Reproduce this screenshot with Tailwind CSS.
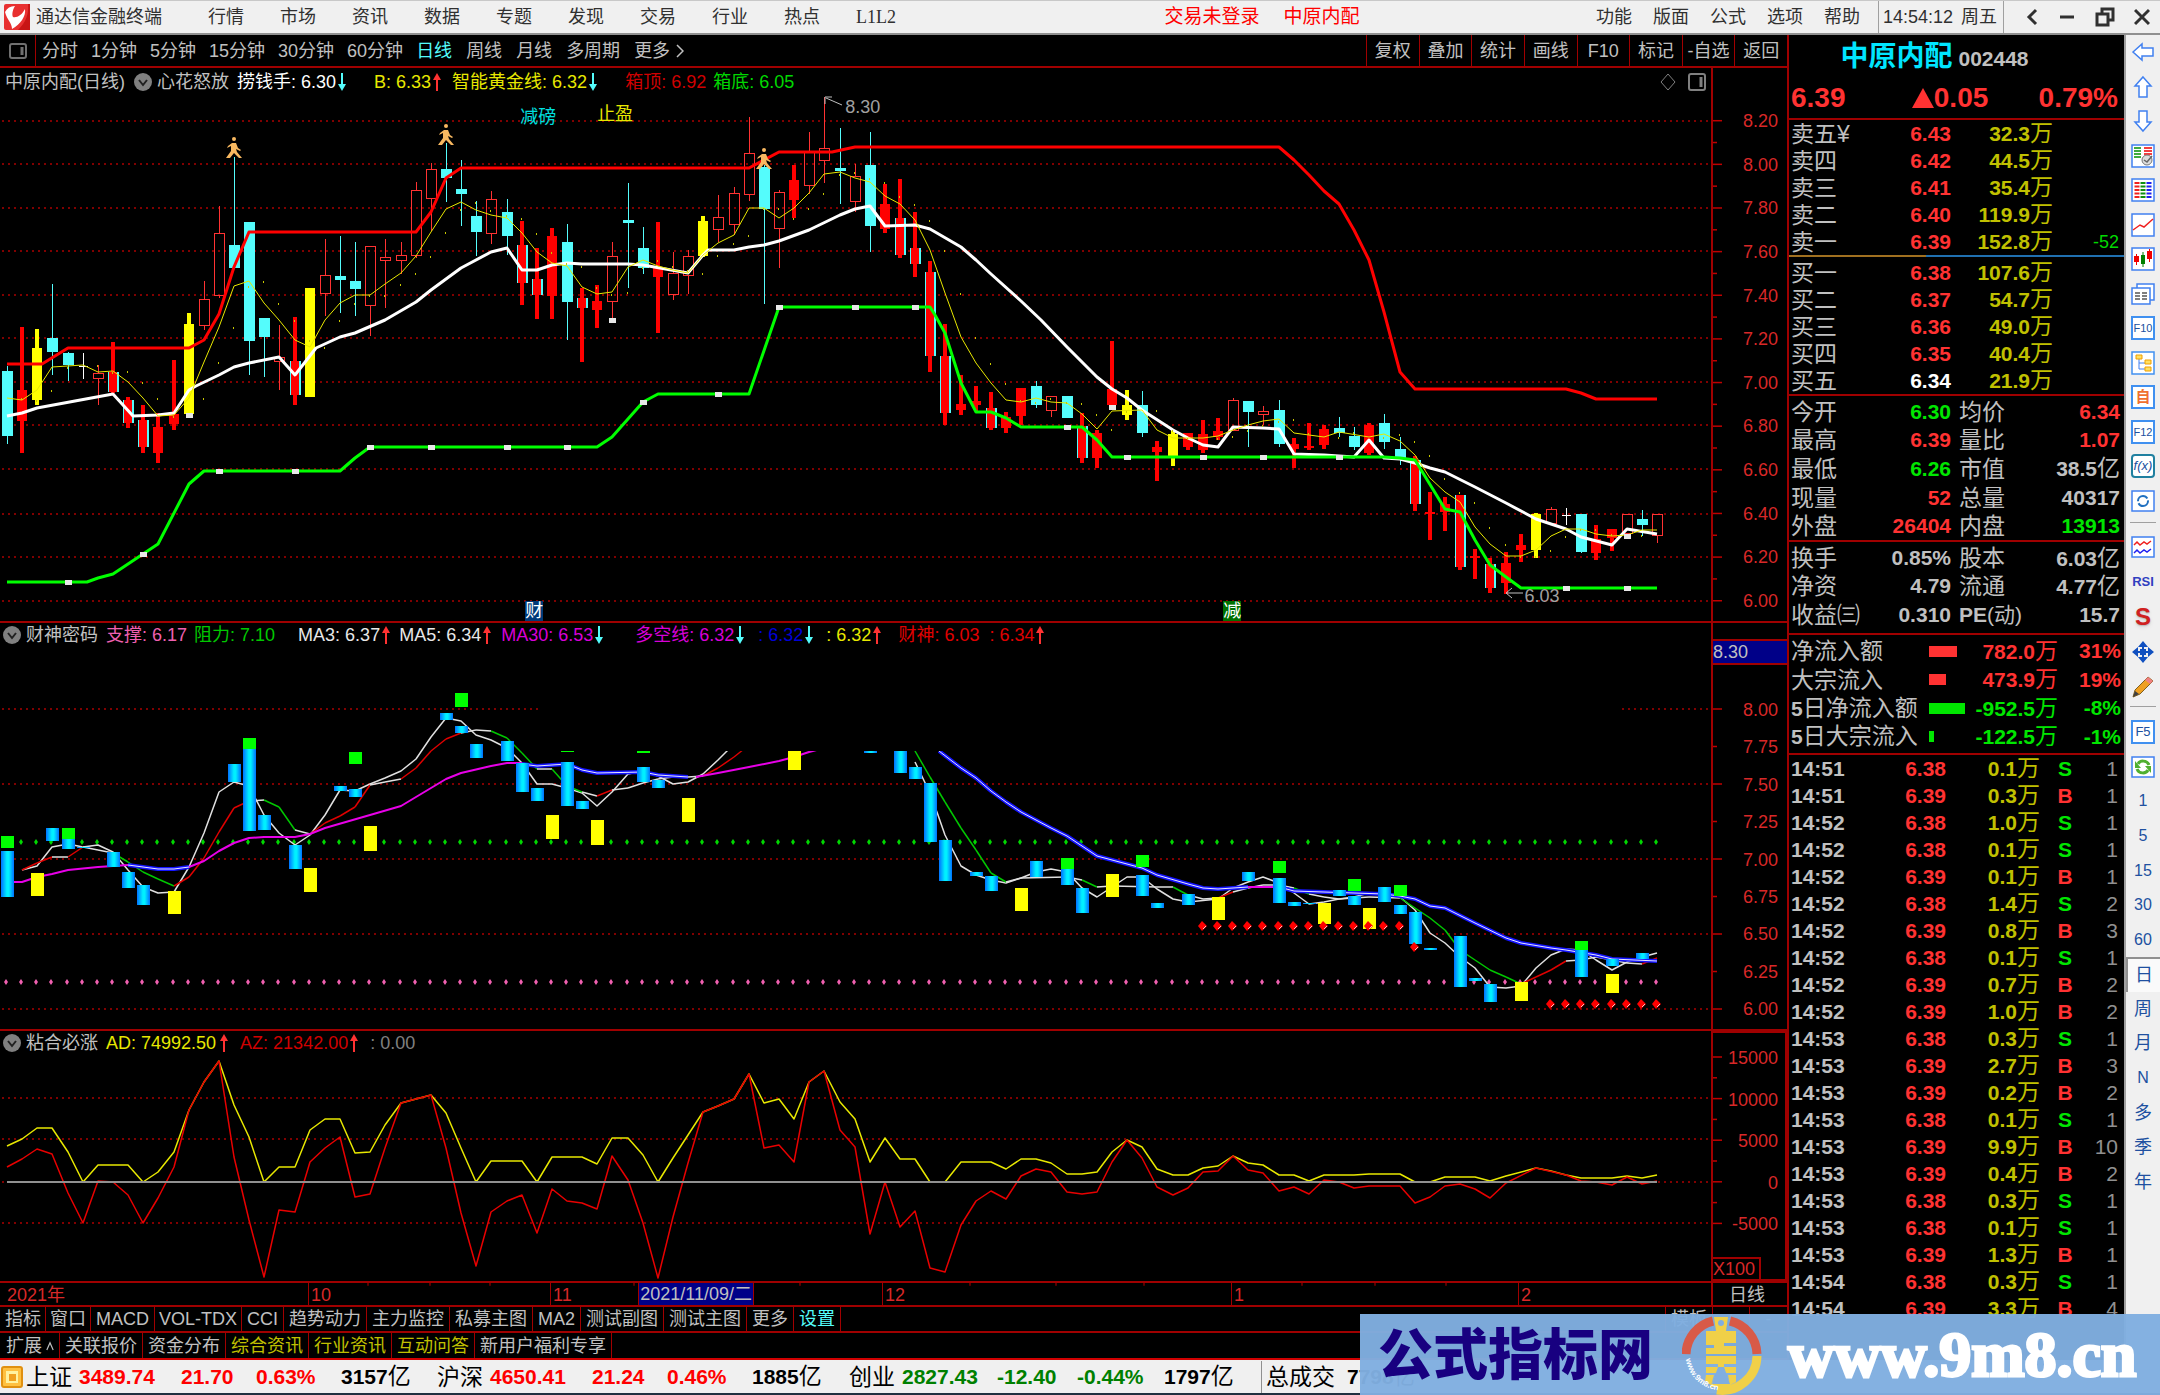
<!DOCTYPE html>
<html lang="zh-CN">
<head>
  <meta charset="UTF-8">
  <meta name="viewport" content="width=device-width, initial-scale=1.0">
  <title>通达信金融终端</title>
  <script src="https://cdn.jsdelivr.net/npm/@tailwindcss/browser@4"></script>
</head>
<body class="bg-black font-['Liberation_Sans','Noto_Sans_CJK_SC',sans-serif] text-[18px] leading-5 text-[#c0c0c0] whitespace-nowrap">
<div class="relative overflow-hidden">

  <!-- menu -->
  <header class="flex h-[35px] items-center border-t border-b-2 border-t-[#c8c8c8] border-b-[#909090] bg-[#f0f0f0] text-[#303030]">
    <svg class="ml-1 h-[26px] w-[26px]" viewBox="0 0 26 26"><rect width="26" height="26" rx="2" fill="#e83030"/><path d="M14 26C22 18 25 10 24 0h2v26z" fill="#c81414"/><path d="M1 8Q4 2 11 2C8 7 8 11 9 13c4 1 9-2 12-8 1 7-4 15-13 20C8 19 3 16 1 8z" fill="#fff"/></svg>
    <span class="ml-1.5 w-[172px]">通达信金融终端</span>
    <nav class="flex">
      <button class="w-[72px] text-left">行情</button>
      <button class="w-[72px] text-left">市场</button>
      <button class="w-[72px] text-left">资讯</button>
      <button class="w-[72px] text-left">数据</button>
      <button class="w-[72px] text-left">专题</button>
      <button class="w-[72px] text-left">发现</button>
      <button class="w-[72px] text-left">交易</button>
      <button class="w-[72px] text-left">行业</button>
      <button class="w-[72px] text-left">热点</button>
      <button class="w-[72px] text-left font-['Liberation_Serif',serif]">L1L2</button>
    </nav>
    <div class="flex flex-1 justify-center gap-6 text-[19px] text-[#ff0000]"><span>交易未登录</span><span>中原内配</span></div>
    <nav class="flex">
      <button class="w-[57px] text-left">功能</button>
      <button class="w-[57px] text-left">版面</button>
      <button class="w-[57px] text-left">公式</button>
      <button class="w-[57px] text-left">选项</button>
      <button class="w-[54px] text-left">帮助</button>
    </nav>
    <div class="flex h-full w-[126px] items-center gap-2 border-x border-[#a0a0a0] pl-1"><span>14:54:12</span><span>周五</span></div>
    <div class="flex w-[156px] items-center justify-between pr-[10px] pl-[20px]">
      <button aria-label="后退"><svg class="h-5 w-4" viewBox="0 0 16 20" fill="none" stroke="#303030" stroke-width="3"><path d="M12 3L5 10l7 7"/></svg></button>
      <button aria-label="最小化"><svg class="h-5 w-4" viewBox="0 0 16 20" stroke="#303030" stroke-width="3"><path d="M1 10h14"/></svg></button>
      <button aria-label="还原"><svg class="h-5 w-5" viewBox="0 0 20 20" fill="none" stroke="#303030" stroke-width="3"><path d="M2 7h11v11H2zM7 7V2h11v11h-5"/></svg></button>
      <button aria-label="关闭"><svg class="h-5 w-4" viewBox="0 0 16 20" stroke="#303030" stroke-width="3"><path d="M1 3l14 14M15 3L1 17"/></svg></button>
    </div>
  </header>

  <div class="flex">
    <main class="min-w-0 flex-1 border-r-2 border-[#a00000]">

      <!-- period toolbar -->
      <div class="flex h-[33px] items-stretch justify-between border-b-2 border-[#a00000]">
        <div class="flex items-center">
          <button class="flex h-full w-9 items-center justify-center border-r border-[#a00000]" aria-label="侧栏"><svg class="h-4 w-[18px]" viewBox="0 0 18 16" fill="none" stroke="#707070" stroke-width="2"><rect x="1" y="1" width="16" height="14" rx="2"/><path d="M13 4v8" stroke-width="3"/></svg></button>
          <div class="flex gap-[13px] pl-[6px]">
            <button>分时</button><button>1分钟</button><button>5分钟</button><button>15分钟</button><button>30分钟</button><button>60分钟</button>
          </div>
          <div class="flex gap-[14px] pl-[13px]">
            <button class="text-[#54fcfc]">日线</button><button>周线</button><button>月线</button><button>多周期</button>
            <button class="flex items-center gap-1.5">更多<svg class="h-4 w-2" viewBox="0 0 8 16" fill="none" stroke="#c0c0c0" stroke-width="1.5"><path d="M1 2l6 6-6 6"/></svg></button>
          </div>
        </div>
        <div class="grid w-[421px] grid-cols-8">
          <button class="border-l border-[#a00000]">复权</button>
          <button class="border-l border-[#a00000]">叠加</button>
          <button class="border-l border-[#a00000]">统计</button>
          <button class="border-l border-[#a00000]">画线</button>
          <button class="border-l border-[#a00000]">F10</button>
          <button class="border-l border-[#a00000]">标记</button>
          <button class="border-l border-[#a00000]">-自选</button>
          <button class="border-l border-[#a00000]">返回</button>
        </div>
      </div>

      <!-- price panel -->
      <section class="flex h-[555px] border-b-2 border-[#a00000]">
        <div class="relative min-w-0 flex-1">
          <svg id="kline" class="absolute inset-0 h-full w-full" viewBox="0 68 1711 553" preserveAspectRatio="none"></svg>
          <div class="relative flex h-7 items-center pl-[5px]">
            <span>中原内配(日线)</span>
            <svg class="ml-[9px] h-[18px] w-[18px]" viewBox="0 0 18 18"><circle cx="9" cy="9" r="9" fill="#808080"/><path d="M5 7l4 5 4-5" fill="none" stroke="#202020" stroke-width="2"/></svg>
            <span class="ml-[5px]">心花怒放</span>
            <span class="ml-2 text-white">捞钱手: 6.30</span><svg class="ml-0.5 h-5 w-2" viewBox="0 0 8 20"><path d="M4 1v12" stroke="#54fcfc" stroke-width="2"/><path d="M0 12h8l-4 7z" fill="#54fcfc"/></svg>
            <span class="ml-7 text-[#e8e800]">B: 6.33</span><svg class="ml-0.5 h-5 w-2" viewBox="0 0 8 20"><path d="M4 19V7" stroke="#ff3232" stroke-width="2"/><path d="M0 8h8L4 1z" fill="#ff3232"/></svg>
            <span class="ml-[11px] text-[#e8e800]">智能黄金线: 6.32</span><svg class="ml-0.5 h-5 w-2" viewBox="0 0 8 20"><path d="M4 1v12" stroke="#54fcfc" stroke-width="2"/><path d="M0 12h8l-4 7z" fill="#54fcfc"/></svg>
            <span class="ml-7 text-[#d00000]">箱顶: 6.92</span>
            <span class="ml-[7px] text-[#00d800]">箱底: 6.05</span>
            <svg class="mr-[5px] ml-auto h-5 w-[46px]" viewBox="0 0 46 20" fill="none" stroke="#808080"><path d="M8 2l7 8-7 8-7-8z"/><rect x="29" y="2" width="16" height="16" rx="2" stroke-width="2"/><path d="M41 5v10" stroke-width="3"/></svg>
          </div>
          <span class="absolute top-[39px] left-[30.4%] text-[#00e0e0]">减磅</span>
          <span class="absolute top-[36px] left-[34.9%] text-[#e8e800]">止盈</span>
          <span class="absolute top-[29px] left-[49.4%] text-[#a0a0a0]">8.30</span>
          <span class="absolute top-[518px] left-[89.1%] text-[#a0a0a0]">6.03</span>
          <span class="absolute top-[533px] left-[30.7%] bg-[#003a78] text-white">财</span>
          <span class="absolute top-[533px] left-[71.5%] bg-[#007000] text-white">减</span>
        </div>
        <div class="relative w-[76px] border-l-2 border-[#a00000]">
          <svg id="ticks1" class="absolute inset-0 h-full w-4" viewBox="0 68 16 553"></svg>
          <div class="flex h-full flex-col justify-between pt-[43px] pr-[9px] pb-[10px] text-right text-[#d82828]">
            <span>8.20</span><span>8.00</span><span>7.80</span><span>7.60</span><span>7.40</span><span>7.20</span><span>7.00</span><span>6.80</span><span>6.60</span><span>6.40</span><span>6.20</span><span>6.00</span>
          </div>
        </div>
      </section>

      <!-- 财神密码 -->
      <section class="flex h-[408px] border-b-2 border-[#a00000]">
        <div class="relative min-w-0 flex-1">
          <svg id="wealth" class="absolute inset-0 h-full w-full" viewBox="0 623 1711 406" preserveAspectRatio="none"></svg>
          <div class="relative flex h-6 items-center pl-[3px]">
            <svg class="h-[18px] w-[18px]" viewBox="0 0 18 18"><circle cx="9" cy="9" r="9" fill="#808080"/><path d="M5 7l4 5 4-5" fill="none" stroke="#202020" stroke-width="2"/></svg>
            <span class="ml-[5px]">财神密码</span>
            <span class="ml-2 text-[#f060b0]">支撑: 6.17</span>
            <span class="ml-[7px] text-[#00c800]">阻力: 7.10</span>
            <span class="ml-[23px] text-[#e8e8e8]">MA3: 6.37</span><svg class="ml-0.5 h-5 w-2" viewBox="0 0 8 20"><path d="M4 19V7" stroke="#ff3232" stroke-width="2"/><path d="M0 8h8L4 1z" fill="#ff3232"/></svg>
            <span class="ml-[9px] text-[#e8e8e8]">MA5: 6.34</span><svg class="ml-0.5 h-5 w-2" viewBox="0 0 8 20"><path d="M4 19V7" stroke="#ff3232" stroke-width="2"/><path d="M0 8h8L4 1z" fill="#ff3232"/></svg>
            <span class="ml-[10px] text-[#d800d8]">MA30: 6.53</span><svg class="ml-0.5 h-5 w-2" viewBox="0 0 8 20"><path d="M4 1v12" stroke="#54fcfc" stroke-width="2"/><path d="M0 12h8l-4 7z" fill="#54fcfc"/></svg>
            <span class="ml-8 text-[#d800d8]">多空线: 6.32</span><svg class="ml-0.5 h-5 w-2" viewBox="0 0 8 20"><path d="M4 1v12" stroke="#54fcfc" stroke-width="2"/><path d="M0 12h8l-4 7z" fill="#54fcfc"/></svg>
            <span class="ml-[14px] text-[#0000d8]">: 6.32</span><svg class="ml-0.5 h-5 w-2" viewBox="0 0 8 20"><path d="M4 1v12" stroke="#54fcfc" stroke-width="2"/><path d="M0 12h8l-4 7z" fill="#54fcfc"/></svg>
            <span class="ml-[13px] text-[#e8e800]">: 6.32</span><svg class="ml-0.5 h-5 w-2" viewBox="0 0 8 20"><path d="M4 19V7" stroke="#ff3232" stroke-width="2"/><path d="M0 8h8L4 1z" fill="#ff3232"/></svg>
            <span class="ml-[17px] text-[#e00000]">财神: 6.03</span>
            <span class="ml-[10px] text-[#e00000]">: 6.34</span><svg class="ml-0.5 h-5 w-2" viewBox="0 0 8 20"><path d="M4 19V7" stroke="#ff3232" stroke-width="2"/><path d="M0 8h8L4 1z" fill="#ff3232"/></svg>
          </div>
        </div>
        <div class="relative w-[76px] border-l-2 border-[#a00000]">
          <svg id="ticks2" class="absolute inset-0 h-full w-4" viewBox="0 623 16 406"></svg>
          <div class="flex h-full flex-col justify-between pt-[77px] pr-[9px] pb-[10px] text-right text-[#d82828]">
            <span>8.00</span><span>7.75</span><span>7.50</span><span>7.25</span><span>7.00</span><span>6.75</span><span>6.50</span><span>6.25</span><span>6.00</span>
          </div>
          <span class="absolute top-4 left-0 w-full border-y-2 border-[#a00000] bg-[#000088] py-px">8.30</span>
        </div>
      </section>

      <!-- 粘合必涨 -->
      <section class="flex h-[252px] border-b-2 border-[#a00000]">
        <div class="relative min-w-0 flex-1">
          <svg id="glue" class="absolute inset-0 h-full w-full" viewBox="0 1031 1711 250" preserveAspectRatio="none"></svg>
          <div class="relative flex h-6 items-center pl-[3px]">
            <svg class="h-[18px] w-[18px]" viewBox="0 0 18 18"><circle cx="9" cy="9" r="9" fill="#808080"/><path d="M5 7l4 5 4-5" fill="none" stroke="#202020" stroke-width="2"/></svg>
            <span class="ml-[5px]">粘合必涨</span>
            <span class="ml-2 text-[#e8e800]">AD: 74992.50</span><svg class="ml-1 h-5 w-2" viewBox="0 0 8 20"><path d="M4 19V7" stroke="#ff3232" stroke-width="2"/><path d="M0 8h8L4 1z" fill="#ff3232"/></svg>
            <span class="ml-3 text-[#d00000]">AZ: 21342.00</span><svg class="ml-0.5 h-5 w-2" viewBox="0 0 8 20"><path d="M4 19V7" stroke="#ff3232" stroke-width="2"/><path d="M0 8h8L4 1z" fill="#ff3232"/></svg>
            <span class="ml-3 text-[#808080]">: 0.00</span>
          </div>
        </div>
        <div class="relative w-[76px] border-2 border-[#a00000]">
          <svg id="ticks3" class="absolute inset-0 h-full w-4" viewBox="0 1033 16 246"></svg>
          <div class="flex h-full flex-col justify-between pt-[15px] pr-[7px] pb-[45px] text-right text-[#d82828]">
            <span>15000</span><span>10000</span><span>5000</span><span>0</span><span>-5000</span>
          </div>
          <span class="absolute bottom-0 left-0 border-t-2 border-r-2 border-[#a00000] pr-1 text-[#d82828]">X100</span>
        </div>
      </section>

      <!-- dates -->
      <div class="flex h-6 border-b-2 border-[#a00000]">
        <div class="relative grid min-w-0 flex-1 grid-cols-[308fr_242fr_332fr_349fr_287fr_193fr] items-stretch text-[#d82828]">
          <svg id="dateTicks" class="absolute inset-0 h-full w-full" viewBox="0 0 1711 24" preserveAspectRatio="none"></svg>
          <span class="pt-0.5 pl-[7px]">2021年</span>
          <span class="border-l border-[#a00000] pt-0.5 pl-0.5">10</span>
          <span class="border-l border-[#a00000] pt-0.5 pl-0.5">11</span>
          <span class="border-l border-[#a00000] pt-0.5 pl-0.5">12</span>
          <span class="border-l border-[#a00000] pt-0.5 pl-0.5">1</span>
          <span class="border-l border-[#a00000] pt-0.5 pl-0.5">2</span>
          <span class="absolute top-0 left-[37.3%] border-x border-[#a00000] bg-[#000088] px-px py-px text-[#c0c0c0]">2021/11/09/二</span>
        </div>
        <span class="w-[76px] border-l-2 border-[#a00000] pt-0.5 pl-4">日线</span>
      </div>

      <!-- indicator tabs -->
      <div class="flex h-[26px] items-stretch border-b-2 border-[#a00000] pl-px">
        <button class="border-r border-[#a00000] px-1">指标</button>
        <button class="border-r border-[#a00000] px-1">窗口</button>
        <button class="border-r border-[#a00000] px-[5px]">MACD</button>
        <button class="border-r border-[#a00000] px-1">VOL-TDX</button>
        <button class="border-r border-[#a00000] px-[5px]">CCI</button>
        <button class="border-r border-[#a00000] px-[5px]">趋势动力</button>
        <button class="border-r border-[#a00000] px-[5px]">主力监控</button>
        <button class="border-r border-[#a00000] px-[5px]">私募主图</button>
        <button class="border-r border-[#a00000] px-[5px]">MA2</button>
        <button class="border-r border-[#a00000] px-[5px]">测试副图</button>
        <button class="border-r border-[#a00000] px-[5px]">测试主图</button>
        <button class="border-r border-[#a00000] px-[5px]">更多</button>
        <button class="border-r border-[#a00000] px-[5px] text-[#54fcfc]">设置</button>
        <button class="ml-auto border-x border-[#a00000] px-[5px]">模板</button>
        <button class="w-[37px] border-r border-[#a00000]">+</button>
        <button class="w-[37px]">-</button>
      </div>
      <div class="flex h-[27px] items-stretch border-b-2 border-[#d00000] pl-px">
        <button class="flex items-center gap-1 border-r border-[#a00000] px-[5px]">扩展<svg class="h-3 w-2" viewBox="0 0 10 12" fill="none" stroke="#c0c0c0" stroke-width="1.5"><path d="M1 11l4-9 4 9"/></svg></button>
        <button class="border-r border-[#a00000] px-[5px]">关联报价</button>
        <button class="border-r border-[#a00000] px-[5px]">资金分布</button>
        <button class="border-r border-[#a00000] px-[5px] text-[#c0c000]">综合资讯</button>
        <button class="border-r border-[#a00000] px-[5px] text-[#c0c000]">行业资讯</button>
        <button class="border-r border-[#a00000] px-[5px] text-[#c0c000]">互动问答</button>
        <button class="border-r border-[#a00000] px-[5px]">新用户福利专享</button>
      </div>
    </main>

    <!-- quote -->
    <aside class="h-[1325px] w-[335px] overflow-hidden text-[21px] leading-6 font-bold">
      <div class="flex h-[85px] flex-col border-b-2 border-[#a00000]">
        <h1 class="flex items-center justify-center gap-1.5 pt-1.5 pr-11"><span class="text-[28px] leading-8 text-[#00e5ff]">中原内配</span><span class="pt-1">002448</span></h1>
        <div class="flex items-center justify-between pt-[9px] pr-1.5 pl-0.5 text-[28px] leading-8 text-[#ff3232]">
          <span>6.39</span>
          <span class="flex items-center pl-4"><svg class="h-5 w-[22px]" viewBox="0 0 22 20"><path d="M11 0l11 20H0z" fill="#ff3232"/></svg>0.05</span>
          <span>0.79%</span>
        </div>
      </div>
      <table class="w-full table-fixed">
        <colgroup><col class="w-[99px]"><col class="w-[63px]"><col class="w-[102px]"><col></colgroup>
        <tbody id="asks"></tbody>
      </table>
      <div class="flex h-0.5"><span class="w-[41%] bg-[#a07020]"></span><span class="flex-1 bg-[#2070b0]"></span></div>
      <div class="h-[139px] border-b-2 border-[#a00000] pt-0.5">
        <table class="w-full table-fixed">
          <colgroup><col class="w-[99px]"><col class="w-[63px]"><col class="w-[102px]"><col></colgroup>
          <tbody id="bids"></tbody>
        </table>
      </div>
      <div class="h-[146px] border-b-2 border-[#a00000] pt-0.5">
        <table class="h-full w-full table-fixed">
          <colgroup><col class="w-[82px]"><col class="w-[80px]"><col class="w-[78px]"><col></colgroup>
          <tbody id="stats"></tbody>
        </table>
      </div>
      <div class="h-[93px] border-b-2 border-[#a00000] pt-0.5 pb-1">
        <table class="h-full w-full table-fixed">
          <colgroup><col class="w-[82px]"><col class="w-[80px]"><col class="w-[78px]"><col></colgroup>
          <tbody id="stats2"></tbody>
        </table>
      </div>
      <div class="h-[120px] border-b-2 border-[#a00000] pt-0.5 pb-0.5">
        <table class="h-full w-full table-fixed">
          <colgroup><col class="w-[140px]"><col class="w-[36px]"><col class="w-[93px]"><col></colgroup>
          <tbody id="flow"></tbody>
        </table>
      </div>
      <table class="w-full table-fixed">
        <colgroup><col class="w-[90px]"><col class="w-[67px]"><col class="w-[94px]"><col class="w-[50px]"><col></colgroup>
        <tbody id="trades"></tbody>
      </table>
    </aside>

    <!-- side tools -->
    <nav class="w-9 border-l-2 border-[#a0a0a0] bg-[#f0f0f0] text-[#2050a0]">
      <div class="grid h-[483px] auto-rows-fr place-items-center [&_svg]:h-6 [&_svg]:w-6">
        <button aria-label="左"><svg viewBox="0 0 24 24" fill="#fff" stroke="#4080f0" stroke-width="1.5"><path d="M2 12l9-8v4h11v8H11v4z"/></svg></button>
        <button aria-label="上"><svg viewBox="0 0 24 24" fill="#fff" stroke="#4080f0" stroke-width="1.5"><path d="M12 2l8 9h-4v11H8V11H4z"/></svg></button>
        <button aria-label="下"><svg viewBox="0 0 24 24" fill="#fff" stroke="#4080f0" stroke-width="1.5"><path d="M12 22l8-9h-4V2H8v11H4z"/></svg></button>
        <button aria-label="报价"><svg viewBox="0 0 24 24" fill="none"><rect x="1" y="1" width="22" height="22" fill="#fff" stroke="#4080f0" stroke-width="1.5"/><path d="M3 4h7M3 7h7M3 10h7M3 13h7" stroke="#009000" stroke-width="1.5"/><path d="M13 4h8M13 7h8M13 10h8" stroke="#f00000" stroke-width="1.5"/><circle cx="16" cy="16" r="5" fill="#ddd" stroke="#777"/><path d="M13 16l3 2 5-6" stroke="#666" stroke-width="1.5"/></svg></button>
        <button aria-label="列表"><svg viewBox="0 0 24 24" fill="none"><rect x="1" y="1" width="22" height="22" fill="#fff" stroke="#4080f0" stroke-width="1.5"/><g stroke-width="5" stroke-dasharray="2 1.5"><path d="M6 4v16" stroke="#f02020"/><path d="M12 4v16" stroke="#109010"/><path d="M18 4v16" stroke="#2020f0"/></g></svg></button>
        <button aria-label="分时图"><svg viewBox="0 0 24 24" fill="none"><rect x="1" y="1" width="22" height="22" fill="#fff" stroke="#4080f0" stroke-width="1.5"/><path d="M2 17l7-5 4 2 9-8" stroke="#f02020" stroke-width="1.5"/></svg></button>
        <button aria-label="K线图"><svg viewBox="0 0 24 24" fill="none"><rect x="1" y="1" width="22" height="22" fill="#fff" stroke="#4080f0" stroke-width="1.5"/><path d="M5.500 7v11M18.500 2v13" stroke="#f00000"/><path d="M12 5v15" stroke="#008000"/><path d="M3 9h5v6H3zM16 4h5v8h-5z" fill="#f00000"/><path d="M10 8h4v9h-4z" fill="#008000"/></svg></button>
        <button aria-label="资料"><svg viewBox="0 0 24 24" fill="#fff" stroke="#4080f0" stroke-width="1.500"><path d="M6 2h17v16H6z"/><path d="M1 6h18v16H1z"/><path d="M4 11h5M11 11h5M4 14h5M11 14h5M4 17h5M11 17h5" stroke="#555"/></svg></button>
        <button class="flex h-6 w-6 items-center justify-center border-2 border-[#4090f0] bg-white text-[11px]">F10</button>
        <button aria-label="板块树"><svg viewBox="0 0 24 24" fill="none"><rect x="1" y="1" width="22" height="22" fill="#fff" stroke="#4090f0" stroke-width="1.500"/><path d="M8 6v12h6M8 12h6" stroke="#4080f0"/><path d="M5 4h6v4H5zM14 9h6v4h-6zM14 16h6v4h-6z" fill="#ffe060" stroke="#f0a000"/></svg></button>
        <button class="flex h-6 w-6 items-center justify-center border-2 border-[#4090f0] bg-white text-[15px] font-bold text-[#f07030]">自</button>
        <button class="flex h-6 w-6 items-center justify-center border-2 border-[#4090f0] bg-white text-[11px]">F12</button>
        <button class="flex h-6 w-6 items-center justify-center rounded-sm border-2 border-[#2080a0] bg-white text-[13px] italic">f(x)</button>
        <button aria-label="刷新"><svg viewBox="0 0 24 24" fill="none"><rect x="1" y="2" width="22" height="20" fill="#fff" stroke="#4080f0" stroke-width="1.500"/><circle cx="12" cy="12" r="5" stroke="#2070c0" stroke-width="2" stroke-dasharray="13 2"/></svg></button>
      </div>
      <hr class="mx-1 mt-1 border-[#a0a0a0]">
      <div class="mt-1.5 grid h-[175px] auto-rows-fr place-items-center [&_svg]:h-6 [&_svg]:w-6">
        <button aria-label="叠加"><svg viewBox="0 0 24 24" fill="none"><rect x="1" y="2" width="22" height="20" fill="#fff" stroke="#4080f0" stroke-width="1.500"/><path d="M3 10l3-3 3 3 4-3 3 2 4-3" stroke="#f02020" stroke-width="1.500"/><path d="M3 18l3-3 3 3 4-3 3 2 4-3" stroke="#2020f0" stroke-width="1.500"/></svg></button>
        <button class="text-[13px] font-bold text-[#3040c0]">RSI</button>
        <button class="text-[24px] leading-6 font-bold text-[#d02020] text-shadow-md">S</button>
        <button aria-label="移动"><svg viewBox="0 0 24 24" fill="#1050c0"><path d="M12 1l5 6H7zM12 23l5-6H7zM1 12l6-5v10zM23 12l-6-5v10z"/><path d="M11 6h2v12h-2zM6 11h12v2H6z"/><path d="M9 9h6v6H9z"/></svg></button>
        <button aria-label="画笔"><svg viewBox="0 0 24 24"><path d="M2 22l2-7L17 2l5 4L9 19z" fill="#f0a020" stroke="#806020"/><path d="M17 2l5 4-3 3-5-4z" fill="#f08080"/><path d="M2 22l2-6 4 3z" fill="#404040"/></svg></button>
      </div>
      <hr class="mx-1 mt-0.5 border-[#a0a0a0]">
      <div class="mt-2 grid h-[484px] auto-rows-fr place-items-center text-[16px]">
        <button class="flex h-6 w-6 items-center justify-center border-2 border-[#4090f0] bg-white text-[13px]">F5</button>
        <button aria-label="更新"><svg class="h-6 w-6" viewBox="0 0 24 24" fill="none"><rect x="1" y="2" width="22" height="20" fill="#fff" stroke="#4080f0" stroke-width="1.500"/><path d="M18 10c-2-5-9-5-11-1M6 14c2 5 9 5 11 1" stroke="#50b030" stroke-width="3"/><path d="M4 6v7h6zM20 18v-7h-6z" fill="#50b030"/></svg></button>
        <button>1</button><button>5</button><button>15</button><button>30</button><button>60</button>
        <button class="h-full w-full border-t-2 border-l-2 border-[#909090] bg-[#fafafa] text-[18px]">日</button>
        <button class="text-[18px]">周</button><button class="text-[18px]">月</button><button>N</button><button class="text-[18px]">多</button><button class="text-[18px]">季</button><button class="text-[18px]">年</button>
      </div>
    </nav>
  </div>

  <!-- index bar -->
  <footer class="flex h-[35px] items-center border-b-2 border-[#203040] bg-[#f0f0f0] text-[21px] leading-6 text-black">
    <svg class="ml-px h-6 w-[22px]" viewBox="0 0 22 24"><rect x="1" y="2" width="20" height="20" rx="2" fill="#ffc040" stroke="#e09010" stroke-width="2"/><rect x="5" y="6" width="12" height="12" fill="#fff2a0"/><rect x="8" y="9" width="7" height="7" fill="#f0a020"/></svg>
    <div class="grid w-[411px] grid-cols-[53px_102px_75px_85px_1fr] items-center pl-[3px] font-bold text-[#ff0000]">
      <span class="text-[23px] font-normal text-black">上证</span><span>3489.74</span><span>21.70</span><span>0.63%</span><span class="text-black">3157<span class="text-[23px] font-normal">亿</span></span>
    </div>
    <div class="grid w-[412px] grid-cols-[53px_102px_75px_85px_1fr] items-center pl-[3px] font-bold text-[#ff0000]">
      <span class="text-[23px] font-normal text-black">沪深</span><span>4650.41</span><span>21.24</span><span>0.46%</span><span class="text-black">1885<span class="text-[23px] font-normal">亿</span></span>
    </div>
    <div class="grid w-[415px] grid-cols-[53px_95px_80px_87px_1fr] items-center pl-[3px] font-bold text-[#008000]">
      <span class="text-[23px] font-normal text-black">创业</span><span>2827.43</span><span>-12.40</span><span>-0.44%</span><span class="text-black">1797<span class="text-[23px] font-normal">亿</span></span>
    </div>
    <div class="flex h-8 items-center gap-3 border-l border-[#909090] pl-1"><span class="text-[23px]">总成交</span><span class="font-bold">7798<span class="font-normal">亿</span></span></div>
  </footer>

  <!-- site banner -->
  <a href="#" class="absolute right-0 bottom-0 flex h-[81px] w-[800px] items-center bg-[#80aee0]/97 pl-[18px]">
    <span class="w-[304px] text-[55px] leading-[60px] font-black text-[#180080]">公式指标网</span>
    <svg class="h-[80px] w-[80px] shrink-0" viewBox="0 0 80 80" fill="none">
      <path d="M4 39A35 35 0 0 1 31 6M48 6a35 35 0 0 1 27 33" stroke="#d85a48" stroke-width="9"/>
      <path d="M75 41a35 35 0 0 1-40 34" stroke="#f0d048" stroke-width="9"/>
      <path d="M32 2h14l-2 14h10v12H42v3h12v8H24v-6h8v-3h-8V16h10z" fill="#f0d048"/><circle cx="39" cy="8" r="3" fill="#80aee0"/>
      <path d="M24 41h30v8H42v3h12v6H24v-6h12v-3H24zM24 60h8l-3 10-6-4zM46 60h8v7l-6 3zM34 60h10l6 12H28z" fill="#f0d048"/>
      <path d="M36 52h6l6 17H30zM24 23h8M46 22h8" fill="#80aee0"/>
      <path id="ring" d="M4 44a36 36 0 0 0 30 31"/>
      <text class="fill-white text-[8px] font-bold"><textPath href="#ring">www.9m8.cn</textPath></text>
    </svg>
    <span class="ml-[26px] font-['Liberation_Serif',serif] text-[64px] leading-[60px] font-bold text-white [-webkit-text-stroke:3px_white]">www.9m8.cn</span>
  </a>
</div>

<script>
  const X = i => Math.round(7 + 15.137 * i);
  const line = (x1, y1, x2, y2, c, w = 1) => `<path d="M${x1} ${y1}L${x2} ${y2}" stroke="${c}" stroke-width="${w}"/>`;
  const box = (x, y, w, h, f, s = 'none') => `<rect x="${x}" y="${y}" width="${w}" height="${h}" fill="${f}" stroke="${s}"/>`;
  const poly = (pts, c, w = 1) => `<polyline points="${pts.trim().split(/\s+/).map(p => { const [i, y] = p.split(':'); return X(+i) + ',' + y; }).join(' ')}" fill="none" stroke="${c}" stroke-width="${w}" stroke-linejoin="round"/>`;
  const grid = ys => ys.map(y => `<path d="M2 ${y}H1711" stroke="#800000" stroke-width="2" stroke-dasharray="2 4"/>`).join('');
  const $ = id => document.getElementById(id);

  // kind, high, body top, body bottom, low
  // c = cyan, r = hollow, R = red, C = red with cyan edge, y = yellow, w = doji
  const candles = `c366,371,436,444 R327,390,421,453 y329,348,400,405 c284,338,352,375 c352,353,365,381 w353,366,366,379 r365,373,378,405 C342,372,392,393 C397,400,423,428 C405,420,447,453
    R413,427,453,463 R360,414,424,430 y313,324,414,415 r281,299,325,330 r206,233,295,298 c157,245,268,268 c222,222,341,375 c318,318,337,377 r325,357,361,390 C317,361,395,405
    y288,288,397,397 r239,275,293,316 c236,276,280,313 c242,281,289,316 r246,246,305,336 r239,257,260,308 r242,255,260,274 r182,190,255,258 r163,169,198,231 c143,169,178,202
    c160,189,194,226 c201,216,232,256 r191,199,233,244 c199,212,236,255 C221,245,283,305 C248,279,295,319 R228,236,296,319 c224,242,302,340 C288,298,308,362 R285,301,310,328
    r242,256,301,322 c183,220,223,288 c227,248,268,274 R222,268,277,333 r252,273,294,300 r250,256,275,294 y216,221,256,257 r195,217,229,242 r187,193,224,235 r117,153,194,201
    c165,167,209,304 r190,192,228,268 R165,180,200,218 r132,152,185,194 r97,148,160,183 c128,168,171,204 r164,176,201,212 c132,165,226,252 R184,204,229,233 C179,218,255,258
    C212,248,264,277 C261,272,356,372 C324,356,413,425 R375,404,410,415 R386,401,405,411 C392,408,428,430 R412,417,428,433 R388,388,416,425 c381,386,405,408 r396,396,410,417
    c396,396,418,418 C413,426,458,463 R430,433,458,468 R341,389,405,405 y390,405,415,420 c391,405,433,437 R441,447,452,481 y430,434,458,466 R433,433,447,450 R420,434,450,453
    R418,431,437,440 r398,400,430,430 c401,401,412,447 r406,411,414,425 c400,410,444,447 R438,444,449,468 R423,446,448,450 R425,429,445,449 c417,428,433,437 c427,436,447,450
    R423,425,453,455 c414,423,442,449 c437,449,459,465 C456,460,504,511 R492,512,514,540 R497,504,512,531 C495,495,567,570 R549,556,558,579 C558,564,588,593 R552,563,583,594
    R534,545,550,562 y513,514,550,558 r507,509,523,523 w508,515,515,525 c514,514,552,553 R525,539,553,560 R529,529,538,551 r514,514,533,533 c510,519,525,536 r514,514,535,543`
    .trim().split(/\s+/);

  let k = grid([121, 164, 208, 251, 295, 338, 382, 425, 469, 514, 557, 601]);
  k += '<g shape-rendering="crispEdges">';
  candles.forEach((s, i) => {
    const [h, t, b, l] = s.slice(1).split(',').map(Number), x = X(i), kind = s[0];
    if (kind === 'c') k += line(x, h, x, l, '#54fcfc') + box(x - 5, t, 11, b - t, '#54fcfc');
    if (kind === 'r') k += line(x, h, x, t, '#ff3232') + line(x, b, x, l, '#ff3232') + box(x - 5, t, 10, b - t, 'none', '#ff3232');
    if (kind === 'R') k += line(x, h, x, l, '#f00', 4) + box(x - 5, t, 10, b - t, '#f00');
    if (kind === 'C') k += box(x - 5, t, 11, b - t, '#54fcfc') + line(x, h, x, l, '#f00', 4) + box(x - 4, t, 8, b - t, '#f00');
    if (kind === 'y') k += line(x, h, x, l, '#ff0', 4) + box(x - 5, t, 10, b - t, '#ff0');
    if (kind === 'w') k += line(x, h, x, l, '#fff') + line(x - 4, t, x + 5, t, '#fff');
  });
  k += '</g>';
  k += poly('0:416 1:413 2:408 7:394 8.3:416 10:415 11:413 12:390 12.5:386 14:375 15:367 16:363 18:357 19:375 20.4:348 22:337 23:333 25:320 27:302 28:290 30:268 32:252 33:248 34:270 35:270 36:265 37:263 38:264 41:264 42:265 45:273 46:255 46.3:250 48:250 49:247 50:245 51:241 53:230 55:215 56:209 57:206 58:226 60:225 61:229 63:247 64:260 65:274 67:301 68.3:320 70:347 72:377 73:389 74:398 75:410 77:430 78:438 79:445 80:447 81:427 83:428 84:429 85:454 87:455 89:457 90:440 91:458 92:459 93:463 94:468 95:472 97:487 99:503 101:519 103:529 104:537 106:545 107:529 109:534', '#fff', 3);
  const gold = '0:398 1:400 2:390 3:367 5:365 6:372 7:371 8:382 9:398 10:416 11:415 12:398 13:362 14:327 15:286 16:281 17:303 18:320 19:340 20:347 21:320 22:303 23:295 24:295 25:284 26:273 27:256 28:232 29:209 30:202 31:210 32:215 33:218 34:233 35:252 36:263 37:266 38:287 39:294 40:292 41:267 42:260 43:266 44:270 45:273 46:255 47:243 48:235 49:208 50:208 51:218 52:208 53:193 54:174 55:172 56:178 57:182 58:196 59:204 60:220 61:250 62:293 63:337 64:363 65:383 66:400 67:402 68:398 69:402 70:403 71:414 72:429 73:411 75:410 76:430 77:438 79:438 80:436 81:430 82:425 83:421 84:419 85:433 87:437 88:432 90:437 91:434 92:441 93:455 94:478 95:492 96:502 97:527 98:544 99:556 100:556 101:550 102:536 103:529 104:529 105:534 106:536 107:535 108:530 109:530';
  k += poly(gold, '#e8e800', 1);
  gold.split(' ').map(p => p.split(':').map(Number)).forEach(([i, y]) => { if (i < 108) k += box(X(i + 1) - 1, y, 1, 2, '#c8c800'); });
  k += poly('0:364 2.3:364 4:348 12:348 13:340 14:314 15:267 16:232 27:232 28:212 29:178 30:168 49:168 51:152 54.5:152 56:147 84:147 85:160 86:175 87:191 88:204 89:230 90:260 91:312 92:372 93:389 103:389 104:393 105:399 109:399', '#f00', 3);
  k += poly('0:582 5.3:582 6:578 7:574 9:554 10:544 12:484 13:471 22:471 23:458 24:447 39:447 40:437 42:402 43:394 49:394 51:307 61:307 61.300:315 62:333 63:383 64:412 65:412 66:418 67:427 71:427 72:440 73:457 91:457 92:458 93:460 95:509 96:512 97:540 98:565 99:577 100:588 109:588', '#0f0', 3);
  [[4,582],[9,554],[14,471],[19,471],[24,447],[28,447],[33,447],[37,447],[42,402],[47,394],[51,307],[56,307],[60,307],[70,427],[74,457],[79,457],[83,457],[88,457],[103,588],[107,588],[12,415],[40,320],[73,407],[107,536]]
    .forEach(([i, y]) => k += box(X(i) - 3, y - 2, 7, 5, '#e8e8e8'));
  [[15,137],[29,124],[50,148]].forEach(([i, y]) => {
    k += `<g transform="translate(${X(i) - 8} ${y})" fill="#f8b860"><circle cx="8" cy="2" r="2"/><path d="M6 6h4l2 5 3 2-1 1-4-2 1 3 5 6h-3l-5-5-4 5H0l5-7V9l-4 2 1-2z"/></g>`;
  });
  k += '<path d="M842 105L826 98M832 97l-7 0v7M1523 593H1507M1512 588l-6 5 6 5" fill="none" stroke="#c0c0c0"/>';
  $('kline').innerHTML = k;

  // second panel
  let s = grid([709, 784, 859, 934, 1009]);
  s += '<defs><linearGradient id="bar"><stop offset="0" stop-color="#0070ff"/><stop offset=".45" stop-color="#00f0ff"/><stop offset=".6" stop-color="#00f0ff"/><stop offset="1" stop-color="#0070ff"/></linearGradient></defs>';
  for (let i = 0; i < 110; i++) {
    s += `<path d="M${X(i) - 3} 842l2-3 2 3-2 3z" fill="#00d800"/><path d="M${X(i) - 3} 982l2-3 2 3-2 3z" fill="#f060b0"/>`;
  }
  s += poly('1:870 2:866 3:847 4:844 5:847 6:845 7:852 8:870 9:887 10:893 11:892 12:867 13:833 14:792 15:782 16:786 17:815 18:833 19:845 20:835 21:815 22:790 23:791 24:784 25:778 26:771 27:759 28:737 29:718 30:721 31:735 32:740 33:748 34:763 35:784 36:784 37:788 38:793 39:806 40:792 41:774 42:771 43:776 44:784 45:782 46:774 47:760 48:744', '#e0e0e0', 1.5);
  s += poly('60:762 61:793 61.5:815 62:835 63:866 64:875 65:880 66:883 67:878 68:872 69:869 70:872 71:888 72:897 73:887 74:877 75:877 76:889 77:899 78:902 80:899 81:888 82:882 83:877 84:883 85:893 86:904 87:902 88:899 89:897 90:893 91:893 92:897 93:910 94:933 95:943 96:957 97:968 98:987 99:988 100:986 101:968 102:955 103:949 104:950 105:960 106:970 107:962 108:957 109:953', '#e0e0e0', 1.5);
  // MA5 is red while rising, green while falling, white when flat
  const ma5 = ['1:870 2:863 3:857 4:857 5:847 6:850 7:853 8:862 9:872 10:879 11:886 12:877 13:858 14:832 15:808 16:801 17:800 18:807 19:830 20:834 21:823 22:816 23:807 24:785 25:782 26:779 27:768 28:751 29:739 30:733 31:730 32:731 33:738 34:753 35:769 36:769 37:786 38:792 39:796 40:790 41:788 42:783 43:779 44:777 45:777 46:776 47:768 48:757 49:745',
    '60:751 61:777 62:802 63:828 64:850 65:873 66:882 67:878 70:877 71:880 72:887 73:886 76:887 77:887 78:895 79:899 80:898 81:892 82:888 83:885 84:885 85:888 86:894 87:897 88:899 90:897 92:898 93:908 94:918 95:930 96:950 97:960 98:970 99:977 100:984 101:977 102:970 103:961 104:960 105:957 106:960 107:963 108:964 109:958'];
  ma5.forEach(t => {
    const p = t.split(' ').map(v => v.split(':').map(Number));
    for (let n = 1; n < p.length; n++) {
      const d = p[n][1] - p[n - 1][1];
      s += line(X(p[n - 1][0]), p[n - 1][1], X(p[n][0]), p[n][1], d > 4 ? '#00c800' : d < -5 ? '#e00000' : '#e0e0e0', 1.5);
    }
  });
  ['0:882 1:882 2:877 3:874 4:870 6:867 8:865', '12:867 13:861 14:851 15:843 16:838 17:837 19:837 20:834 21:828 24:815 26:806 28:788 29:779 30:773 32:766 33:763 34:763', '45.5:777 47:773 49:767 51:761 52:757 53:752 54:748', '82:887 84:887']
    .forEach(t => s += poly(t, '#e800e8', 2));
  ['8:865 9:867 10:869 11:869 12:867', '34:764 35:766 37:764 38:770 39:773 42:772 43:775 45:777', '61.6:751 63:768 64:778 65:791 66:802 67:812 69:828 70:836 72:856 73:860 75:868 76:875 78:884 79:888 80:889 82:887', '84:887 85:891 87:892 91:894 92:896 93:899 94:906 95:908 97:923 99:938 100:943 102:948 103:950 105:955 106:959 109:961']
    .forEach(t => s += poly(t, '#1414ff', 4) + poly(t, '#e8e8ff', 1));
  const bars = (t, fill) => t.split(' ').forEach(v => { const [i, a, b] = v.split(',').map(Number); s += box(X(i) - 6, a, 13, b - a, fill); });
  bars('0,851,897 3,828,841 4,838,849 5,847,848 7,852,867 8,872,888 9,885,905 15,764,782 16,749,831 17,815,830 19,845,869 22,786,791 23,789,797 29,713,720 30,726,733 31,744,758 33,741,761 34,763,792 35,788,801 37,762,806 38,801,809 42,767,782 43,780,788 57,751,753 59,751,773 60,767,779 61,783,842 62,840,881 64,872,876 65,876,891 68,861,877 70,869,885 71,888,913 75,875,896 76,903,908 78,894,905 82,872,881 84,878,903 85,902,906 86,903,904 88,890,896 89,896,905 91,887,902 92,905,914 93,912,944 94,948,950 96,936,987 97,978,981 98,984,1002 104,950,977 106,959,966 108,953,959', 'url(#bar)');
  bars('0,836,848 4,828,839 16,738,749 23,752,764 30,693,707 42,751,753 37,751,752 70,858,869 75,855,867 84,861,873 89,879,891 92,885,896 104,941,950', '#0f0');
  bars('2,873,896 11,891,914 20,868,892 24,826,851 36,815,839 39,820,845 45,798,822 52,751,770 67,888,911 73,874,897 80,897,920 87,903,924 90,908,929 100,982,1001 106,974,993', '#ff0');
  const gem = (i, y) => `<path d="M${X(i) - 5} ${y}l4-5 5 5-5 5z" fill="#f00"/><path d="M${X(i)} ${y + 3}l3-3" stroke="#ffc0c0"/>`;
  for (let i = 79; i < 93; i++) s += gem(i, 926);
  for (let i = 102; i < 110; i++) s += gem(i, 1004);
  s += gem(93, 947);
  s += box(540, 650, 1080, 101, '#000');
  $('wealth').innerHTML = s;

  // third panel
  $('glue').innerHTML = grid([1098, 1139, 1182, 1223])
    + poly('0:1146 1:1139 2:1128 3:1128 4:1152 5:1182 6:1165 8:1165 9:1182 10:1172 11:1152 12:1110 13:1082 14:1061 15:1105 16:1137 17:1182 18:1167 19:1167 20:1130 21:1119 22:1119 23:1153 24:1152 25:1125 26:1103 28:1095 29:1113 30:1148 31:1182 32:1161 34:1161 35:1182 36:1157 38:1157 39:1164 40:1138 41:1138 42:1155 43:1182 44:1158 46:1112 47:1106 48:1099 49:1074 50:1103 51:1099 52:1119 53:1082 54:1071 55:1102 56:1119 57:1162 58:1138 59:1159 60:1159 61:1182 62:1182 63:1162 65:1162 66:1169 67:1159 68:1159 69:1163 70:1174 71:1174 72:1172 73:1152 74:1140 75:1147 76:1169 77:1175 78:1175 79:1168 80:1166 81:1156 82:1163 83:1165 84:1175 85:1175 86:1181 87:1175 89:1175 90:1174 92:1174 93:1182 94:1182 95:1177 97:1177 98:1181 99:1176 101:1168 102:1171 103:1175 104:1178 106:1178 107:1176 108:1178 109:1175', '#e8e800', 1.5)
    + poly('0:1167 1:1159 2:1149 3:1154 4:1193 5:1223 6:1181 7:1182 8:1195 9:1223 10:1198 11:1167 12:1110 13:1082 14:1061 15:1157 16:1220 17:1277 18:1210 19:1212 20:1162 21:1148 22:1137 23:1197 24:1194 25:1148 26:1103 28:1095 29:1148 30:1213 31:1266 32:1212 33:1201 34:1195 35:1233 36:1189 37:1201 38:1203 39:1209 40:1156 41:1180 42:1223 43:1278 44:1217 45:1163 46:1112 47:1106 48:1099 49:1074 50:1148 51:1145 52:1162 53:1082 54:1071 55:1130 56:1147 57:1234 58:1182 59:1227 60:1211 61:1268 62:1272 63:1225 64:1201 65:1191 66:1199 67:1176 68:1169 69:1172 70:1192 71:1194 72:1192 73:1162 74:1140 75:1158 76:1187 77:1195 78:1188 79:1172 80:1171 81:1156 82:1170 83:1173 84:1191 85:1187 86:1194 87:1180 88:1182 89:1188 90:1186 92:1186 93:1203 94:1197 95:1186 96:1184 97:1189 98:1198 99:1183 101:1168 103:1175 104:1181 105:1182 106:1185 107:1177 108:1184 109:1181', '#e80000', 1.5)
    + line(7, 1182, 1657, 1182, '#909090', 2);

  // scale ticks, every second one is long
  const ticks = (id, y0, step, n) => { let t = ''; for (let j = 0; j < n; j++) t += line(0, y0 + j * step, j % 2 ? 4 : 9, y0 + j * step, '#c00000', 1.5); $(id).innerHTML = t; };
  ticks('ticks1', 120.7, 21.82, 23);
  ticks('ticks2', 709, 37.5, 9);
  ticks('ticks3', 1057, 20.8, 9);
  $('dateTicks').innerHTML = [368, 430, 490, 634, 800, 970, 1056, 1144, 1302, 1375, 1446].map(x => line(x, 0, x, 3, '#c00000')).join('');

  // quote tables
  const unit = v => v.replace(/[万亿]/, u => `<span class="text-[23px] font-normal">${u}</span>`);
  const level = (n, p, v, extra = '', c = 'text-[#ff3232]') => `<tr class="h-[27px]"><th class="pl-0.5 text-left text-[23px] font-normal">${n}</th><td class="text-right ${c}">${p}</td><td class="text-right text-[#c0c000]">${unit(v)}</td><td class="pr-[5px] text-right text-[18px] font-normal text-[#00d800]">${extra}</td></tr>`;
  $('asks').innerHTML = level('卖五¥', '6.43', '32.3万') + level('卖四', '6.42', '44.5万') + level('卖三', '6.41', '35.4万') + level('卖二', '6.40', '119.9万') + level('卖一', '6.39', '152.8万', '-52');
  $('bids').innerHTML = level('买一', '6.38', '107.6万') + level('买二', '6.37', '54.7万') + level('买三', '6.36', '49.0万') + level('买四', '6.35', '40.4万') + level('买五', '6.34', '21.9万', '', 'text-white');

  const tone = { r: 'text-[#ff3232]', g: 'text-[#00e600]', n: 'text-[#c0c0c0]' };
  const stat = ([a, av, ac, b, bv, bc]) => `<tr><th class="pl-0.5 text-left text-[23px] font-normal">${a}</th><td class="text-right ${tone[ac]}">${av}</td><th class="pl-2 text-left text-[23px] font-normal">${b}</th><td class="pr-1 text-right ${tone[bc]}">${unit(bv)}</td></tr>`;
  $('stats').innerHTML = [['今开', '6.30', 'g', '均价', '6.34', 'r'], ['最高', '6.39', 'r', '量比', '1.07', 'r'], ['最低', '6.26', 'g', '市值', '38.5亿', 'n'], ['现量', '52', 'r', '总量', '40317', 'n'], ['外盘', '26404', 'r', '内盘', '13913', 'g']].map(stat).join('');
  $('stats2').innerHTML = [['换手', '0.85%', 'n', '股本', '6.03亿', 'n'], ['净资', '4.79', 'n', '流通', '4.77亿', 'n'], ['收益㈢', '0.310', 'n', '<span class="text-[21px]"><b>PE</b>(动)</span>', '15.7', 'n']].map(stat).join('');
  $('flow').innerHTML = [['净流入额', 28, '782.0万', '31%', 'r'], ['大宗流入', 17, '473.9万', '19%', 'r'], ['<b class="text-[21px]">5</b>日净流入额', 36, '-952.5万', '-8%', 'g'], ['<b class="text-[21px]">5</b>日大宗流入', 5, '-122.5万', '-1%', 'g']]
    .map(([n, w, v, p, c]) => `<tr class="${tone[c]}"><th class="pl-0.5 text-left text-[23px] font-normal text-[#c0c0c0]">${n}</th><td><div class="h-[11px] bg-current" style="width:${w}px"></div></td><td class="text-right">${unit(v)}</td><td class="pr-[3px] text-right">${p}</td></tr>`).join('');

  const trades = '51S0.1,1 51B0.3,1 52S1.0,1 52S0.1,1 52B0.1,1 52S1.4,2 52B0.8,3 52S0.1,1 52B0.7,2 52B1.0,2 53S0.3,1 53B2.7,3 53B0.2,2 53S0.1,1 53B9.9,10 53B0.4,2 53S0.3,1 53S0.1,1 53B1.3,1 54S0.3,1 54B3.3,4'.split(' ');
  $('trades').innerHTML = trades.map(t => {
    const sell = t[2] === 'S', [v, n] = t.slice(3).split(',');
    return `<tr class="h-[27px]"><td class="pl-0.5">14:${t.slice(0, 2)}</td><td class="text-right text-[#ff3232]">${sell ? '6.38' : '6.39'}</td><td class="text-right text-[#c0c000]">${unit(v + '万')}</td><td class="text-center ${sell ? tone.g : tone.r}">${t[2]}</td><td class="pr-1.5 text-right font-normal text-[#909090]">${n}</td></tr>`;
  }).join('');
</script>
</body>
</html>
